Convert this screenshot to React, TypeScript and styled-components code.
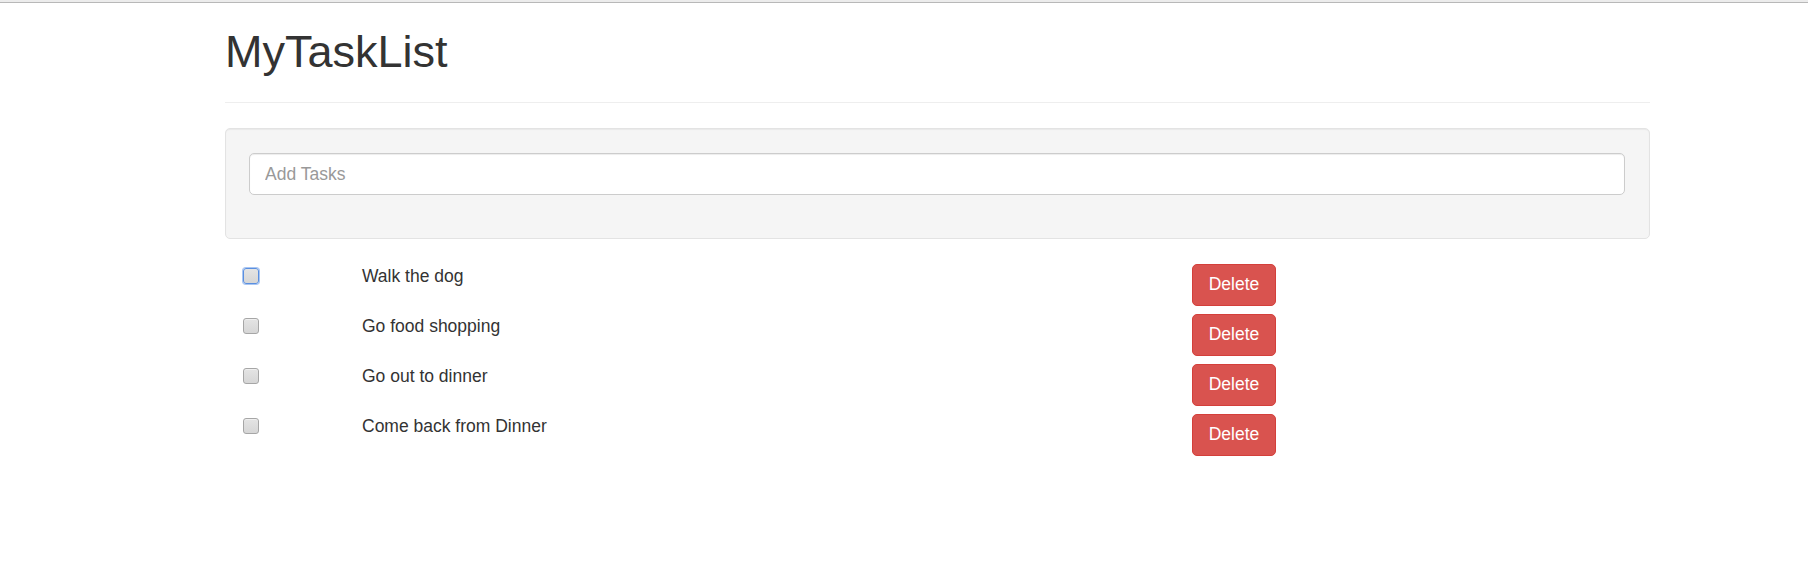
import React from "react";
import styled, { createGlobalStyle } from "styled-components";

const GlobalStyle = createGlobalStyle`
  html, body {
    margin: 0;
    padding: 0;
    background: #ffffff;
  }
  body {
    font-family: "Liberation Sans", Arial, Helvetica, sans-serif;
    font-size: 17.5px;
    line-height: 1.42857;
    color: #333333;
  }
  * { box-sizing: border-box; }
`;

const TopBar = styled.div`
  height: 3px;
  background: #ececec;
  border-bottom: 1px solid #b8b8b8;
`;

const Container = styled.div`
  margin-left: 225px;
  width: 1425px;
`;

const PageHeader = styled.header`
  padding-top: 24px;
  padding-bottom: 25px;
  margin-bottom: 25px;
  border-bottom: 1px solid #eeeeee;
`;

const Title = styled.h1`
  margin: 0;
  font-size: 45px;
  line-height: 50px;
  font-weight: 400;
  color: #333333;
`;

const Well = styled.div`
  background: #f5f5f5;
  border: 1px solid #e3e3e3;
  border-radius: 5px;
  padding: 24px 24px 24px 23px;
  box-shadow: inset 0 1px 1px rgba(0, 0, 0, 0.05);
  margin-bottom: 25px;
`;

const FormGroup = styled.div`
  margin-bottom: 19px;
`;

const TaskInput = styled.input`
  display: block;
  width: 100%;
  height: 42px;
  padding: 0 15px;
  font-family: inherit;
  font-size: 17.5px;
  color: #555555;
  background: #ffffff;
  border: 1px solid #cccccc;
  border-radius: 5px;
  box-shadow: inset 0 1px 1px rgba(0, 0, 0, 0.075);
  outline: none;
  &::placeholder {
    color: #999999;
  }
`;

const TaskList = styled.div`
  display: flex;
  flex-direction: column;
  gap: 8px;
`;

const TaskRow = styled.div`
  display: grid;
  grid-template-columns: 119px 830px auto;
  align-items: start;
  padding-left: 18px;
  height: 42px;
`;

const CheckBox = styled.input<{ $focused?: boolean }>`
  appearance: none;
  -webkit-appearance: none;
  margin: 4px 0 0 0;
  width: 16px;
  height: 16px;
  border-radius: 3px;
  border: 1px solid ${(p) => (p.$focused ? "#5a8fe0" : "#a6a6a6")};
  background: linear-gradient(#e4e4e4, #d6d6d6);
  box-shadow: ${(p) => (p.$focused ? "0 0 0 1px #a9c6f2" : "inset 0 1px 0 #efefef")};
`;

const TaskText = styled.span`
  font-size: 17.5px;
  line-height: 25px;
  color: #333333;
`;

const DeleteButton = styled.button`
  width: 84px;
  height: 42px;
  padding: 0 15px 1px;
  font-family: inherit;
  font-size: 17.5px;
  line-height: 1;
  color: #ffffff;
  background: #d9534f;
  border: 1px solid #d43f3a;
  border-radius: 5px;
  cursor: pointer;
`;

const tasks = ["Walk the dog", "Go food shopping", "Go out to dinner", "Come back from Dinner"];

export default function App() {
  return (
    <>
      <GlobalStyle />
      <TopBar />
      <Container>
        <PageHeader>
          <Title>MyTaskList</Title>
        </PageHeader>
        <Well>
          <FormGroup>
            <TaskInput type="text" placeholder="Add Tasks" />
          </FormGroup>
        </Well>
        <TaskList>
          {tasks.map((t, i) => (
            <TaskRow key={t}>
              <CheckBox type="checkbox" $focused={i === 0} />
              <TaskText>{t}</TaskText>
              <DeleteButton>Delete</DeleteButton>
            </TaskRow>
          ))}
        </TaskList>
      </Container>
    </>
  );
}
